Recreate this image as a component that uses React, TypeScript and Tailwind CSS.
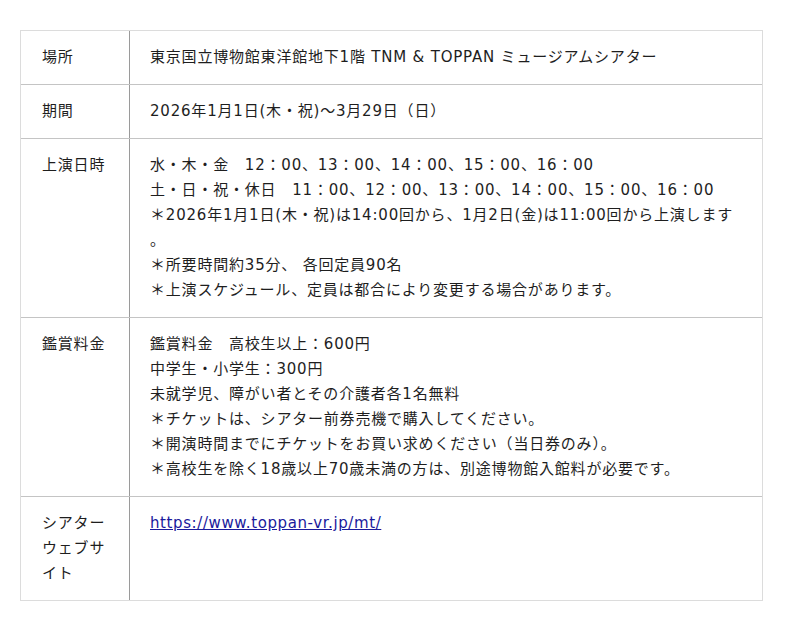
import React from "react"

type Row = {
  label: string
  lines?: string[]
  link?: string
}

const rows: Row[] = [
  { label: "場所", lines: ["東京国立博物館東洋館地下1階 TNM & TOPPAN ミュージアムシアター"] },
  { label: "期間", lines: ["2026年1月1日(木・祝)～3月29日（日）"] },
  {
    label: "上演日時",
    lines: [
      "水・木・金　12：00、13：00、14：00、15：00、16：00",
      "土・日・祝・休日　11：00、12：00、13：00、14：00、15：00、16：00",
      "＊2026年1月1日(木・祝)は14:00回から、1月2日(金)は11:00回から上演します",
      "。",
      "＊所要時間約35分、 各回定員90名",
      "＊上演スケジュール、定員は都合により変更する場合があります。",
    ],
  },
  {
    label: "鑑賞料金",
    lines: [
      "鑑賞料金　高校生以上：600円",
      "中学生・小学生：300円",
      "未就学児、障がい者とその介護者各1名無料",
      "＊チケットは、シアター前券売機で購入してください。",
      "＊開演時間までにチケットをお買い求めください（当日券のみ）。",
      "＊高校生を除く18歳以上70歳未満の方は、別途博物館入館料が必要です。",
    ],
  },
  { label: "シアターウェブサイト", link: "https://www.toppan-vr.jp/mt/" },
]

export default function App() {
  return (
    <div className="w-[800px] h-[631px] bg-white pt-[30px] pl-[20px] [font-family:'DejaVu_Sans','Noto_Sans_CJK_JP',sans-serif] text-[15px] leading-[25px] tracking-[0.8px] text-[#1e1e1e]">
      <div className="w-[743px] border border-[#dcdcdc] border-b-0">
        {rows.map((r, i) => (
          <div
            key={i}
            className={
              i === rows.length - 1
                ? "flex border-b border-[#dcdcdc]"
                : "flex border-b border-[#c4c4c4]"
            }
          >
            <div className="w-[109px] shrink-0 border-r border-[#9a9a9a] pl-[21px] pr-[18px] py-[14px]">
              {r.label}
            </div>
            <div className="flex-1 pl-[20px] pr-[10px] py-[14px] whitespace-nowrap">
              {r.lines?.map((l, j) => (
                <div key={j}>{l}</div>
              ))}
              {r.link && (
                <a href={r.link} className="text-[#1a1a9c] underline tracking-[0.6px]">
                  {r.link}
                </a>
              )}
            </div>
          </div>
        ))}
      </div>
    </div>
  )
}
